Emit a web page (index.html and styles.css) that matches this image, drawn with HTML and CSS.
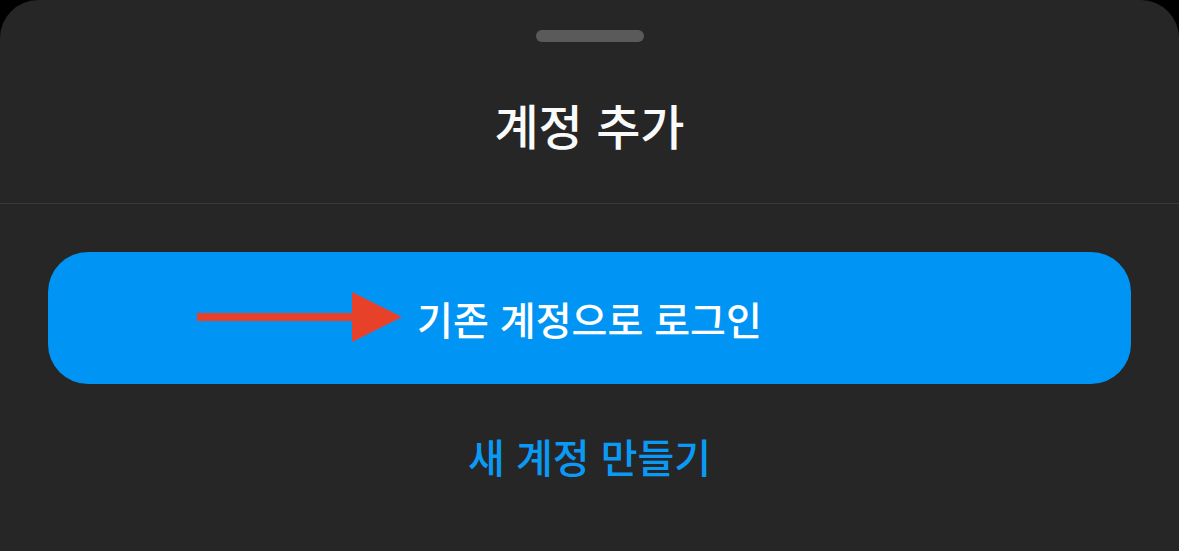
FILE: index.html
```html
<!DOCTYPE html>
<html lang="ko">
<head>
<meta charset="utf-8">
<title>계정 추가</title>
<link rel="stylesheet" href="styles.css">
</head>
<body>
<div class="sheet">
  <div class="header">
    <div class="handle"></div>
    <h1 class="title">계정 추가</h1>
  </div>
  <div class="content">
    <button class="primary">
      <svg class="arrow" width="210" height="52" viewBox="0 0 210 52">
        <rect x="0" y="21" width="160" height="8" fill="#e8412a"/>
        <polygon points="155,0 205,25 155,50" fill="#e8412a"/>
      </svg>
      <span>기존 계정으로 로그인</span>
    </button>
    <a class="secondary" href="#">새 계정 만들기</a>
  </div>
</div>
</body>
</html>
```

FILE: styles.css
```css
html, body {
  margin: 0;
  padding: 0;
  background: #000;
}
body {
  width: 1179px;
  height: 551px;
  overflow: hidden;
  font-family: "Noto Sans CJK KR", "Noto Sans", sans-serif;
}
.sheet {
  background: #262626;
  border-radius: 38px 38px 0 0;
  height: 551px;
  display: flex;
  flex-direction: column;
}
.header {
  height: 204px;
  border-bottom: 1px solid #3a3a3a;
  display: flex;
  flex-direction: column;
  align-items: center;
  box-sizing: border-box;
  padding-top: 30px;
}
.handle {
  width: 108px;
  height: 12px;
  border-radius: 6px;
  background: #5a5a5a;
}
.title {
  margin: 58px 0 0;
  color: #fafafa;
  font-size: 48px;
  font-weight: 500;
  line-height: 1;
}
.content {
  padding: 48px 48px 0;
  display: flex;
  flex-direction: column;
  align-items: stretch;
}
.primary {
  position: relative;
  height: 132px;
  border: none;
  border-radius: 40px;
  background: #0095f5;
  color: #fff;
  font-family: inherit;
  font-size: 39px;
  font-weight: 500;
  display: flex;
  align-items: center;
  justify-content: center;
  padding: 0;
}
.arrow {
  position: absolute;
  left: 149px;
  top: 40px;
}
.secondary {
  align-self: center;
  margin-top: 52px;
  color: #0a9af5;
  text-decoration: none;
  font-size: 40px;
  font-weight: 500;
  line-height: 1;
}
```
